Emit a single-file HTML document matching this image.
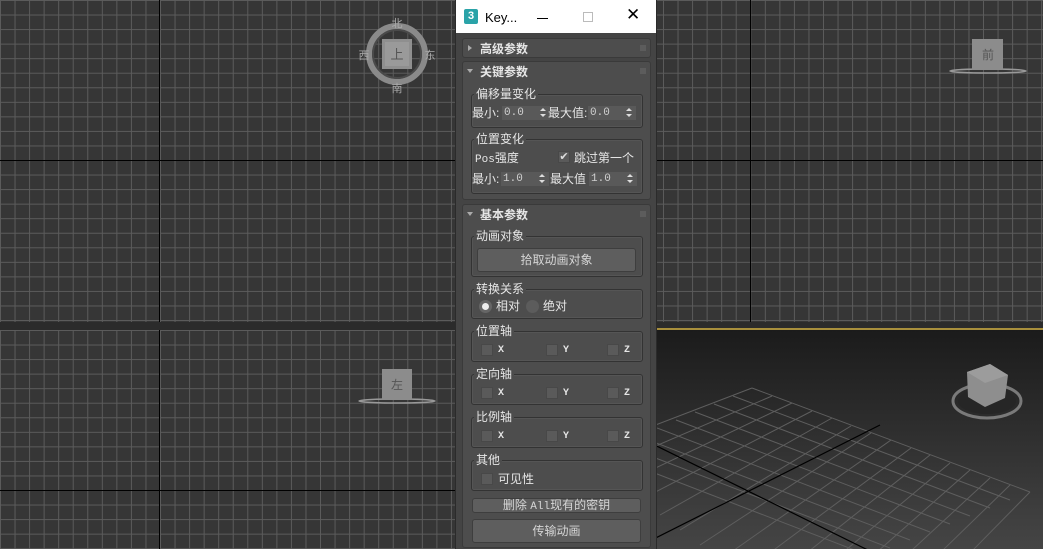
<!DOCTYPE html>
<html style="overflow:hidden;width:1043px;height:549px"><head><meta charset="utf-8"><style>
*{margin:0;padding:0;box-sizing:border-box}
body{width:1043px;height:549px;overflow:hidden;background:#2b2b2b;position:relative;font-family:"Liberation Sans","Noto Sans CJK SC",sans-serif;color:#e6e6e6}
.vp{position:absolute;background-color:#363636;
background-image:linear-gradient(90deg,#5c5c5c 1px,transparent 1px),linear-gradient(#5c5c5c 1px,transparent 1px);
background-size:14.55px 14.55px}
.ab{position:absolute}
.bl{position:absolute;background:#000}
.panel{position:absolute;left:456px;top:0;width:200px;height:549px;background:#444;overflow:hidden}
.t{position:absolute;font-size:12px;white-space:nowrap;line-height:14px}
.roll{position:absolute;background:#4d4d4d;border:1px solid #3a3a3a;border-radius:3px}
.grp{position:absolute;border:1px solid #333;border-radius:3px;box-shadow:inset 0 0 0 1px #555}
.lbl{position:absolute;background:#4d4d4d;padding:0 2px;font-size:12px;line-height:14px}
.fld{position:absolute;background:#595959;height:14px;font-family:"Liberation Mono",monospace;font-size:11px;color:#cfcfcf;line-height:14px;padding-left:2px}
.fld:after{content:"";position:absolute;right:4px;top:2px;border:3px solid transparent;border-bottom:3px solid #ddd;border-top:0;}
.fld:before{content:"";position:absolute;right:4px;top:8px;border:3px solid transparent;border-top:3px solid #ddd;border-bottom:0}
.cb{position:absolute;width:12px;height:12px;background:#5a5a5a;border:1px solid #484848}
.btn{position:absolute;background:#5e5e5e;border:1px solid #3e3e3e;border-radius:3px;text-align:center;font-size:12px;color:#d6d6d6}
.xyz{position:absolute;font-family:"Liberation Mono",monospace;font-size:10px;font-weight:bold}
.hd{position:absolute;font-size:12px;font-weight:bold}
.tri{position:absolute;width:0;height:0}
.dots{position:absolute;width:6px;height:6px;background-image:radial-gradient(#8a8a8a 40%,transparent 45%);background-size:2px 2px}
</style></head><body>
<div class="vp" style="left:0;top:0;width:455px;height:322px"></div>
<div class="bl" style="left:159px;top:0;width:1px;height:322px"></div>
<div class="bl" style="left:0;top:160px;width:455px;height:1px"></div>
<div class="vp" style="left:657px;top:0;width:386px;height:322px;background-position:6px 0"></div>
<div class="bl" style="left:750px;top:0;width:1px;height:322px"></div>
<div class="bl" style="left:657px;top:160px;width:386px;height:1px"></div>
<div class="vp" style="left:0;top:330px;width:455px;height:219px"></div>
<div class="bl" style="left:159px;top:330px;width:1px;height:219px"></div>
<div class="bl" style="left:0;top:490px;width:455px;height:1px"></div>
<div class="ab" style="left:657px;top:328px;width:386px;height:221px;background:linear-gradient(#1b1b1b,#2c2c2c 40%,#454545);border-top:2px solid #a88f3c"></div>
<svg class="ab" style="left:0;top:0;overflow:hidden;display:block" width="1043" height="549">
<defs><clipPath id="c"><rect x="657" y="331" width="386" height="218"/></clipPath></defs>
<g clip-path="url(#c)" stroke="#5e5e5e" stroke-width="1" fill="none">
<path d="M752 388 L1030 492 M752 388 L580 454"/>
<path d="M772 396 L600 470 M792 403 L620 485 M812 411 L640 500 M832 418 L660 515 M851 426 L680 530 M871 433 L700 545 M891 440 L720 560 M911 448 L740 575 M930 455 L760 590 M950 463 L780 605 M970 470 L800 620 M990 478 L820 635 M1010 485 L840 650 M1030 492 L860 665"/>
<path d="M733 396 L1010 500 M714 404 L990 508 M695 412 L970 516 M676 420 L950 524 M657 428 L930 532 M638 436 L910 540 M619 444 L890 548 M600 452 L870 556"/>
</g>
<g clip-path="url(#c)" stroke="#000" stroke-width="1.2">
<path d="M620 428 L880 556 M880 425 L620 556"/>
</g>
<circle cx="397" cy="54" r="28" fill="none" stroke="#8a8a8a" stroke-width="6"/>
<circle cx="397" cy="54" r="24" fill="none" stroke="#4a4a4a" stroke-width="2"/>
<rect x="382" y="39" width="30" height="30" fill="#8f8f8f"/>
<rect x="385" y="42" width="24" height="24" fill="#9a9a9a"/>
<text x="397" y="59" font-size="13" fill="#555" text-anchor="middle" font-family="Noto Sans CJK SC">上</text>
<g font-size="11" fill="#aaa" font-family="Noto Sans CJK SC" text-anchor="middle">
<text x="397" y="27">北</text><text x="397" y="92">南</text><text x="364" y="59">西</text><text x="430" y="59">东</text></g>
<ellipse cx="988" cy="71" rx="38" ry="2" fill="none" stroke="#999" stroke-width="1.5"/>
<rect x="972" y="39" width="31" height="31" fill="#8c8c8c"/>
<text x="988" y="59" font-size="12" fill="#555" text-anchor="middle" font-family="Noto Sans CJK SC">前</text>
<ellipse cx="397" cy="401" rx="38" ry="2" fill="none" stroke="#999" stroke-width="1.5"/>
<rect x="382" y="369" width="30" height="31" fill="#8c8c8c"/>
<text x="397" y="389" font-size="12" fill="#555" text-anchor="middle" font-family="Noto Sans CJK SC">左</text>
<ellipse cx="987" cy="401" rx="34" ry="17" fill="none" stroke="#7a7a7a" stroke-width="3"/>
<ellipse cx="987" cy="401" rx="29" ry="13" fill="#262626"/>
<path d="M967 372 L990 364 L1008 375 L1005 398 L985 407 L968 397 Z" fill="#8e8e8e"/>
<path d="M967 372 L990 364 L1008 375 L985 383 Z" fill="#9c9c9c"/>
</svg>
<div class="panel">
<div class="ab" style="left:0;top:0;width:200px;height:33px;background:#fff"></div>
<div class="ab" style="left:8px;top:9px;width:14px;height:15px;background:#2aa3a8;border-radius:2px;color:#fff;font-size:11px;font-weight:bold;text-align:center;line-height:15px">3</div>
<div class="t" style="left:29px;top:11px;color:#000;font-size:13px">Key...</div>
<div class="ab" style="left:81px;top:18px;width:11px;height:1px;background:#000"></div>
<div class="ab" style="left:127px;top:12px;width:10px;height:10px;border:1px solid #bbb"></div>
<div class="t" style="left:170px;top:8px;color:#000;font-size:17px;font-weight:300">✕</div>

<div class="roll" style="left:6px;top:38px;width:189px;height:20px"></div>
<div class="tri" style="left:12px;top:45px;border-left:4px solid #aaa;border-top:3px solid transparent;border-bottom:3px solid transparent"></div>
<div class="hd" style="left:24px;top:40px">高级参数</div>
<div class="dots" style="left:184px;top:45px"></div>

<div class="roll" style="left:6px;top:61px;width:189px;height:139px"></div>
<div class="tri" style="left:11px;top:69px;border-top:4px solid #aaa;border-left:3px solid transparent;border-right:3px solid transparent"></div>
<div class="hd" style="left:24px;top:63px">关键参数</div>
<div class="dots" style="left:184px;top:68px"></div>
<div class="grp" style="left:15px;top:94px;width:172px;height:34px"></div>
<div class="lbl" style="left:18px;top:87px">偏移量变化</div>
<div class="t" style="left:16px;top:106px">最小:</div>
<div class="fld" style="left:46px;top:106px;width:48px">0.0</div>
<div class="t" style="left:92px;top:106px">最大值:</div>
<div class="fld" style="left:132px;top:106px;width:48px">0.0</div>
<div class="grp" style="left:15px;top:139px;width:172px;height:55px"></div>
<div class="lbl" style="left:18px;top:132px">位置变化</div>
<div class="t" style="left:19px;top:151px"><span style="font-family:'Liberation Mono';font-size:11px">Pos</span>强度</div>
<div class="cb" style="left:102px;top:151px;font-size:11px;line-height:10px;text-align:center;color:#ddd">✔</div>
<div class="t" style="left:118px;top:151px">跳过第一个</div>
<div class="t" style="left:16px;top:172px">最小:</div>
<div class="fld" style="left:45px;top:172px;width:48px">1.0</div>
<div class="t" style="left:94px;top:172px">最大值</div>
<div class="fld" style="left:133px;top:172px;width:48px">1.0</div>

<div class="roll" style="left:6px;top:204px;width:189px;height:344px"></div>
<div class="tri" style="left:11px;top:212px;border-top:4px solid #aaa;border-left:3px solid transparent;border-right:3px solid transparent"></div>
<div class="hd" style="left:24px;top:206px">基本参数</div>
<div class="dots" style="left:184px;top:211px"></div>

<div class="grp" style="left:15px;top:236px;width:172px;height:41px"></div>
<div class="lbl" style="left:18px;top:229px">动画对象</div>
<div class="btn" style="left:21px;top:248px;width:159px;height:24px;line-height:22px">拾取动画对象</div>

<div class="grp" style="left:15px;top:289px;width:172px;height:30px"></div>
<div class="lbl" style="left:18px;top:282px">转换关系</div>
<div class="ab" style="left:23px;top:300px;width:13px;height:13px;border-radius:50%;background:#eee;border:3px solid #666"></div>
<div class="t" style="left:40px;top:299px">相对</div>
<div class="ab" style="left:70px;top:300px;width:13px;height:13px;border-radius:50%;background:#5c5c5c"></div>
<div class="t" style="left:87px;top:299px">绝对</div>

<div class="grp" style="left:15px;top:331px;width:172px;height:31px"></div>
<div class="lbl" style="left:18px;top:324px">位置轴</div>
<div class="cb" style="left:25px;top:344px"></div><div class="xyz" style="left:42px;top:345px">X</div>
<div class="cb" style="left:90px;top:344px"></div><div class="xyz" style="left:107px;top:345px">Y</div>
<div class="cb" style="left:151px;top:344px"></div><div class="xyz" style="left:168px;top:345px">Z</div>

<div class="grp" style="left:15px;top:374px;width:172px;height:31px"></div>
<div class="lbl" style="left:18px;top:367px">定向轴</div>
<div class="cb" style="left:25px;top:387px"></div><div class="xyz" style="left:42px;top:388px">X</div>
<div class="cb" style="left:90px;top:387px"></div><div class="xyz" style="left:107px;top:388px">Y</div>
<div class="cb" style="left:151px;top:387px"></div><div class="xyz" style="left:168px;top:388px">Z</div>

<div class="grp" style="left:15px;top:417px;width:172px;height:31px"></div>
<div class="lbl" style="left:18px;top:410px">比例轴</div>
<div class="cb" style="left:25px;top:430px"></div><div class="xyz" style="left:42px;top:431px">X</div>
<div class="cb" style="left:90px;top:430px"></div><div class="xyz" style="left:107px;top:431px">Y</div>
<div class="cb" style="left:151px;top:430px"></div><div class="xyz" style="left:168px;top:431px">Z</div>

<div class="grp" style="left:15px;top:460px;width:172px;height:31px"></div>
<div class="lbl" style="left:18px;top:453px">其他</div>
<div class="cb" style="left:25px;top:473px"></div>
<div class="t" style="left:42px;top:472px">可见性</div>

<div class="btn" style="left:16px;top:498px;width:169px;height:15px;line-height:13px">删除 <span style="font-family:'Liberation Mono';font-size:11px">All</span>现有的密钥</div>
<div class="btn" style="left:16px;top:519px;width:169px;height:24px;line-height:22px">传输动画</div>
</div>
</body></html>
